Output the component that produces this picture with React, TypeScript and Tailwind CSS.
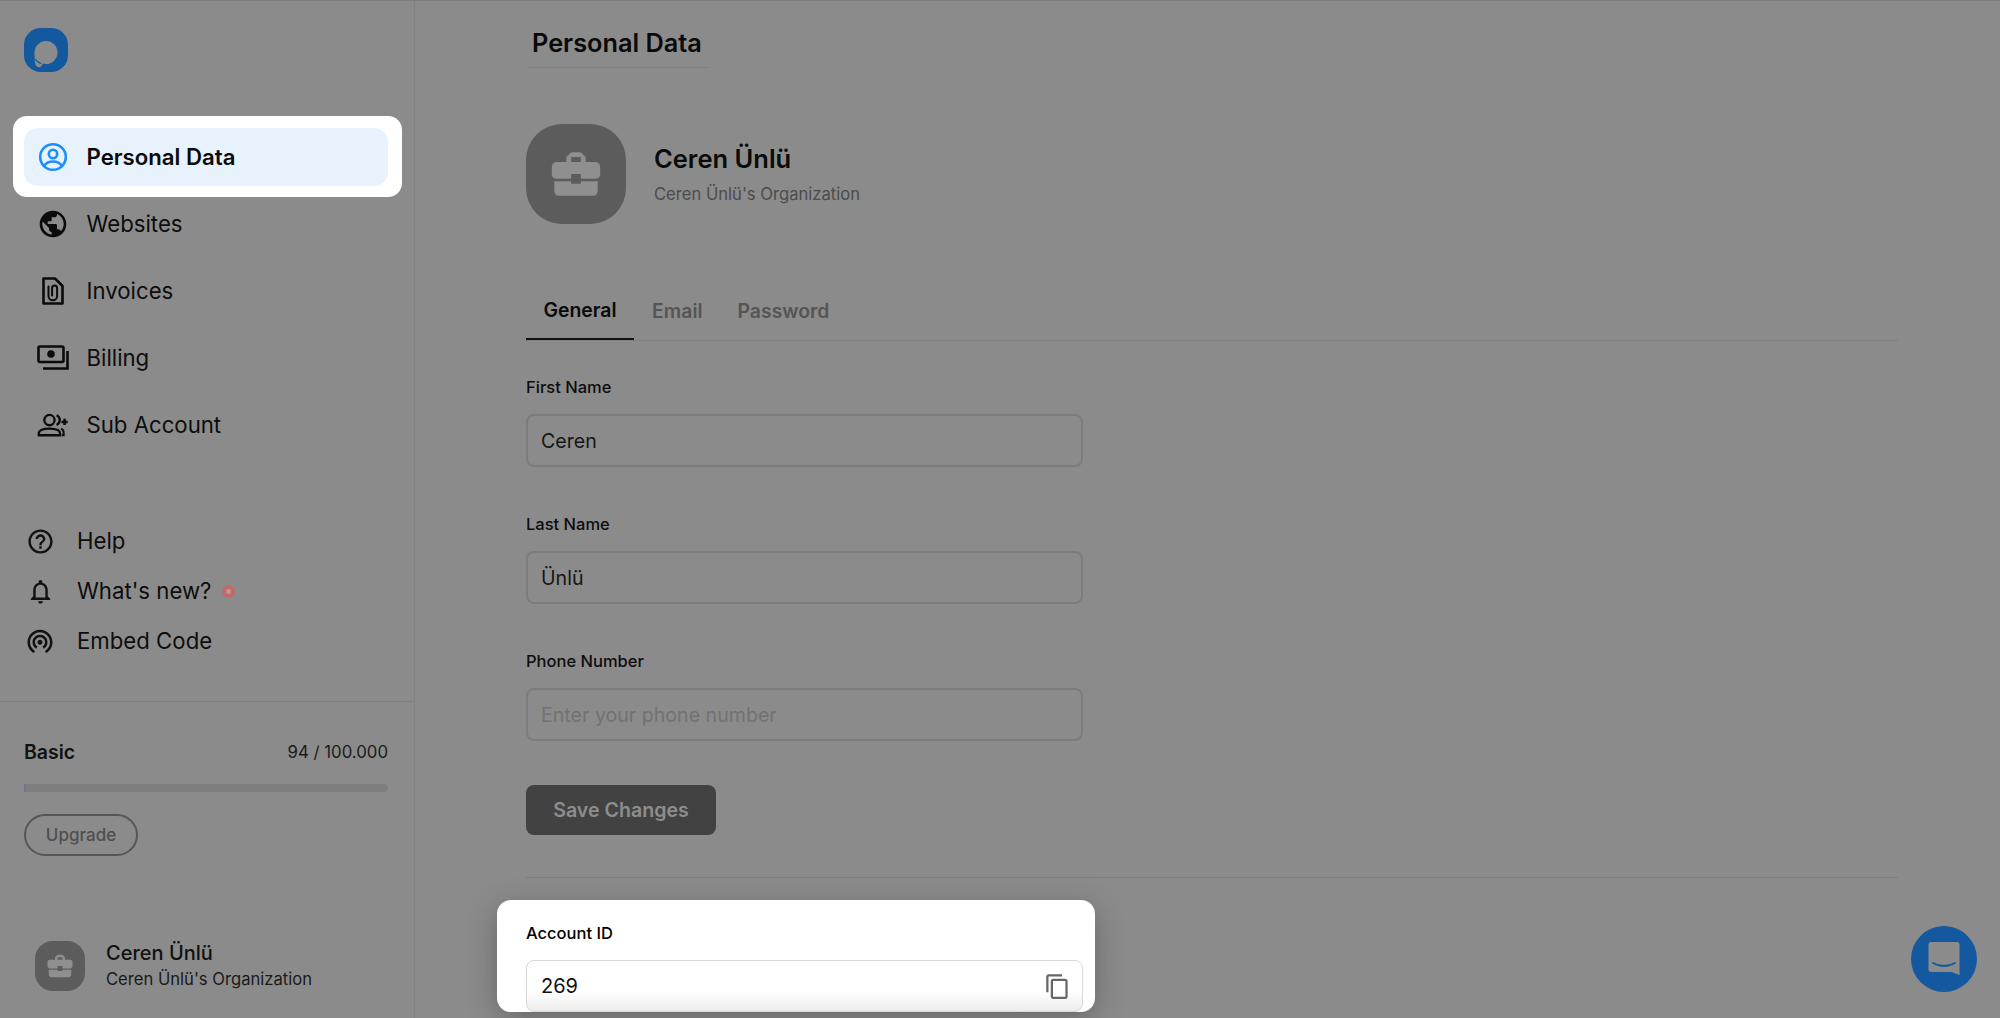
import type { ReactNode } from "react";
import {
  MdBusinessCenter,
  MdContentCopy,
  MdOutlineHelpOutline,
  MdOutlineNotifications,
  MdPublic,
  MdWifiTethering,
} from "react-icons/md";

const UserCircleIcon = () => (
  <svg width="30" height="30" viewBox="0 0 30 30" fill="none" stroke="#1a8fff" strokeWidth="2.600">
    <circle cx="15" cy="15" r="12.800" />
    <circle cx="15" cy="12" r="4.200" />
    <path d="M6 24c2-3.300 5.200-4.500 9-4.500s7 1.200 9 4.500" />
  </svg>
);

const InvoiceIcon = () => (
  <svg width="24" height="30" viewBox="0 0 24 30" fill="none" stroke="#0b0b0b" strokeWidth="2.600" strokeLinejoin="round">
    <path d="M2.500 2.500h11.500l7.500 7.500v17.500h-19z" />
    <path d="M7.500 10.500v9.500a4.300 4.300 0 0 0 8.600 0v-8a2.500 2.500 0 0 0-5 0v7.500" strokeLinecap="round" strokeWidth="2" />
  </svg>
);

const BillingIcon = () => (
  <svg width="32" height="26" viewBox="0 0 32 26" fill="none" stroke="#0b0b0b" strokeWidth="2.600">
    <rect x="1.500" y="1.500" width="25" height="15.500" rx="1.500" />
    <circle cx="14" cy="9" r="3.800" fill="#0b0b0b" stroke="none" />
    <path d="M30.500 6v17.500H6" />
  </svg>
);

const AddUserIcon = () => (
  <svg width="36" height="26" viewBox="0 0 36 26" fill="none" stroke="#0b0b0b" strokeWidth="2.600">
    <circle cx="14" cy="7.500" r="5.800" />
    <path d="M2 24.500v-2c0-3.500 5-5.500 12-5.500s12 2 12 5.500v2z" />
    <path d="M22 2a6 6 0 0 1 0 11" />
    <path d="M27 17c2 .8 3 2.500 3 4.500v3h-2" strokeWidth="2.200" />
    <path d="M31 6v7M27.500 9.500h7" strokeWidth="2.800" />
  </svg>
);

const Logo = () => (
  <div className="flex h-[44px] w-[44px] items-center justify-center rounded-[38%] bg-[#14589f]">
    <svg width="44" height="44" viewBox="0 0 44 44">
      <path
        d="M22 13a11.500 11.500 0 0 1 0 23c-1 0-2-.1-3-.4l-2 3c-1 1-3.800 1-5-1-.9-1.500-1.500-5-1.500-13A11.500 11.500 0 0 1 22 13z"
        fill="#8b8b8b"
      />
      <path d="M11 31c1.500 2.200 3.500 3.800 6 4.700" stroke="#14589f" strokeWidth="1.300" fill="none" />
    </svg>
  </div>
);

const ChatGlyph = () => (
  <svg width="32" height="36" viewBox="0 0 32 36" fill="none">
    <path d="M3 1h26a2.500 2.500 0 0 1 2.500 2.500V34l-8-3H3a2.500 2.500 0 0 1-2.500-2.500v-25A2.500 2.500 0 0 1 3 1z" fill="#8b8b8b" />
    <path d="M5 22c6.500 4 15.500 4 22 0" stroke="#14589f" strokeWidth="1.800" strokeLinecap="round" />
  </svg>
);

const Squircle = ({ size, icon, radius }: { size: string; icon: number; radius: string }) => (
  <div className={`flex shrink-0 items-center justify-center bg-[#5c5c5c] text-[#8f8f8f] ${size} ${radius}`}>
    <MdBusinessCenter size={icon} />
  </div>
);

const NavItem = ({ icon, label }: { icon: ReactNode; label: string }) => (
  <a className="flex h-[58px] items-center gap-[17.500px] pl-[13px] text-[22.200px] text-[#0d0d0d]">
    <span className="flex w-[32px] justify-center">{icon}</span>
    {label}
  </a>
);

const SmallNavItem = ({ icon, label, dot }: { icon: ReactNode; label: string; dot?: boolean }) => (
  <a className="flex h-[50px] items-center gap-[21px] text-[22.200px] text-[#0d0d0d]">
    <span className="flex w-[32px] justify-center">{icon}</span>
    {label}
    {dot && <span className="-ml-[10px] h-[13px] w-[13px] rounded-full border-[4px] border-[#c26a68] bg-[#b59a98]" />}
  </a>
);

const Field = ({ label, value, placeholder }: { label: string; value?: string; placeholder?: string }) => (
  <div>
    <div className="h-[24px] text-[16.500px] font-medium leading-[24px] text-[#0d0d0d]">{label}</div>
    <div className="mt-[15px] flex h-[53px] w-[557px] items-center rounded-[8px] border-2 border-[#7c7c7c] px-[13px] pt-[2px] text-[19.600px]">
      {value ? <span className="text-[#161616]">{value}</span> : <span className="text-[#727272]">{placeholder}</span>}
    </div>
  </div>
);

export default function App() {
  return (
    <div className="relative flex h-screen w-full overflow-hidden border-t border-[#7d7d7d] bg-[#8b8b8b] font-['Inter',sans-serif]">
      <aside className="flex h-full w-[415px] shrink-0 flex-col border-r border-[#828282]">
        <div className="ml-[24px] mt-[27px]">
          <Logo />
        </div>

        <nav className="ml-[24px] mr-[26px] mt-[56px] flex flex-col gap-[9px]">
          <div className="relative">
            <div className="absolute -bottom-[11px] -left-[11px] -right-[14px] -top-[12px] rounded-[14px] bg-white" />
            <a className="relative flex h-[58px] items-center gap-[17.500px] rounded-[14px] bg-[#e8f2fd] pl-[13px] text-[22.200px] font-semibold text-[#0a0a0a]">
              <span className="flex w-[32px] justify-center">
                <UserCircleIcon />
              </span>
              Personal Data
            </a>
          </div>
          <NavItem icon={<MdPublic size={34} color="#0b0b0b" />} label="Websites" />
          <NavItem icon={<InvoiceIcon />} label="Invoices" />
          <NavItem icon={<BillingIcon />} label="Billing" />
          <NavItem icon={<AddUserIcon />} label="Sub Account" />
        </nav>

        <div className="mx-[24px] mt-[62px] flex flex-col">
          <SmallNavItem icon={<MdOutlineHelpOutline size={29} color="#111" />} label="Help" />
          <SmallNavItem icon={<MdOutlineNotifications size={29} color="#111" />} label="What's new?" dot />
          <SmallNavItem icon={<MdWifiTethering size={30} color="#111" />} label="Embed Code" />
        </div>

        <div className="mt-[35px] border-t border-[#7f7f7f] pl-[24px] pr-[26px] pt-[39px]">
          <div className="flex h-[24px] items-center justify-between">
            <span className="text-[19.500px] font-semibold text-[#111]">Basic</span>
            <span className="text-[16.800px] text-[#1a1a1a]">94 / 100.000</span>
          </div>
          <div className="mt-[19px] h-[8px] w-full rounded-full bg-[#7e7e7e]">
            <div className="h-full w-[2px] bg-[#6d7390]" />
          </div>
          <button className="mt-[22px] flex h-[42px] w-[114px] items-center justify-center rounded-full border-2 border-[#565656] pt-[1px] text-[17px] font-medium text-[#4f4f4f]">
            Upgrade
          </button>
        </div>

        <div className="ml-[35px] mt-[84px] flex items-center gap-[21px]">
          <Squircle size="h-[50px] w-[50px]" icon={30} radius="rounded-[36%]" />
          <div>
            <div className="-mt-[1px] text-[20px] font-medium leading-[28px] text-[#111]">Ceren Ünlü</div>
            <div className="text-[16.600px] leading-[24px] text-[#1a1a1a]">Ceren Ünlü's Organization</div>
          </div>
        </div>
      </aside>

      <main className="min-w-0 flex-1 pl-[111px] pr-[102px]">
        <div className="ml-[2px] mt-[25px] w-[180px] border-b border-[#7f7f7f] pb-[8px] pl-[4px] text-[25.300px] font-semibold leading-[33px] text-[#0a0a0a]">
          Personal Data
        </div>

        <div className="mt-[56px] flex items-center gap-[28px]">
          <Squircle size="h-[100px] w-[100px]" icon={58} radius="rounded-[36%]" />
          <div className="-mt-[2px]">
            <div className="text-[25.500px] font-semibold leading-[36px] text-[#0a0a0a]">Ceren Ünlü</div>
            <div className="mt-[5px] text-[16.600px] leading-[24px] text-[#4c4c4c]">Ceren Ünlü's Organization</div>
          </div>
        </div>

        <div className="mt-[60px] flex h-[57px] gap-[1px] border-b border-[#7f7f7f]">
          <div className="flex h-[56px] items-center border-b-2 border-[#111] px-[17.500px] pb-[1px] text-[19.400px] font-semibold text-[#0a0a0a]">
            General
          </div>
          <div className="flex h-[56px] items-center px-[17px] pb-[1px] text-[19.400px] font-semibold text-[#555]">Email</div>
          <div className="flex h-[56px] items-center px-[17px] pb-[1px] text-[19.400px] font-semibold text-[#555]">Password</div>
        </div>

        <div className="mt-[34px] flex flex-col gap-[45px]">
          <Field label="First Name" value="Ceren" />
          <Field label="Last Name" value="Ünlü" />
          <Field label="Phone Number" placeholder="Enter your phone number" />
        </div>

        <button className="mt-[44px] h-[50px] w-[190px] rounded-[8px] bg-[#424242] pt-[1px] text-[19.600px] font-semibold text-[#8d8d8d]">
          Save Changes
        </button>

        <div className="mt-[42px] border-t border-[#7f7f7f]" />

        <div className="-ml-[29px] mt-[22px] h-[112px] w-[598px] overflow-hidden rounded-[14px] bg-white pl-[29px] pt-[21px] shadow-[0_8px_30px_rgba(0,0,0,0.25)]">
          <div className="h-[24px] text-[16.500px] font-medium leading-[24px] text-black">Account ID</div>
          <div className="mt-[15px] flex h-[52px] w-[557px] items-center justify-between rounded-[8px] border border-[#d8d8d8] bg-gradient-to-b from-white from-60% to-[#ececec] pl-[14px] pr-[11px] text-[20px] text-[#111]">
            269
            <MdContentCopy size={27} color="#666" />
          </div>
        </div>
      </main>

      <div className="absolute bottom-[26px] right-[23px] flex h-[66px] w-[66px] items-center justify-center rounded-full bg-[#14589f]">
        <ChatGlyph />
      </div>
    </div>
  );
}
